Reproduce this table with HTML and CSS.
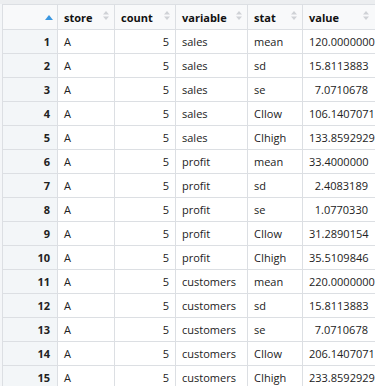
FILE: index.html
```html
<!DOCTYPE html>
<html lang="en">
<head>
    <meta charset="UTF-8">
    <title>Data Viewer</title>
    <link rel="stylesheet" href="styles.css">
</head>
<body>
    <div class="top-strip"></div>
    <table class="grid">
        <thead>
            <tr>
                <th class="col-row">
                    <svg class="sort sort-active" width="8" height="5" viewBox="0 0 8 5"><path d="M0 5 L4 0 L8 5 Z"/></svg>
                </th>
                <th class="col-store">store<svg class="sort" width="6" height="9" viewBox="0 0 6 9"><path d="M0 3.5 L3 0 L6 3.5 Z M0 5.5 L3 9 L6 5.5 Z"/></svg></th>
                <th class="col-count">count<svg class="sort" width="6" height="9" viewBox="0 0 6 9"><path d="M0 3.5 L3 0 L6 3.5 Z M0 5.5 L3 9 L6 5.5 Z"/></svg></th>
                <th class="col-variable">variable<svg class="sort" width="6" height="9" viewBox="0 0 6 9"><path d="M0 3.5 L3 0 L6 3.5 Z M0 5.5 L3 9 L6 5.5 Z"/></svg></th>
                <th class="col-stat">stat<svg class="sort" width="6" height="9" viewBox="0 0 6 9"><path d="M0 3.5 L3 0 L6 3.5 Z M0 5.5 L3 9 L6 5.5 Z"/></svg></th>
                <th class="col-value">value<svg class="sort" width="6" height="9" viewBox="0 0 6 9"><path d="M0 3.5 L3 0 L6 3.5 Z M0 5.5 L3 9 L6 5.5 Z"/></svg></th>
            </tr>
        </thead>
        <tbody id="rows"></tbody>
    </table>

    <script>
        const data = [
            ['sales', 'mean', '120.0000000'],
            ['sales', 'sd', '15.8113883'],
            ['sales', 'se', '7.0710678'],
            ['sales', 'CIlow', '106.1407071'],
            ['sales', 'CIhigh', '133.8592929'],
            ['profit', 'mean', '33.4000000'],
            ['profit', 'sd', '2.4083189'],
            ['profit', 'se', '1.0770330'],
            ['profit', 'CIlow', '31.2890154'],
            ['profit', 'CIhigh', '35.5109846'],
            ['customers', 'mean', '220.0000000'],
            ['customers', 'sd', '15.8113883'],
            ['customers', 'se', '7.0710678'],
            ['customers', 'CIlow', '206.1407071'],
            ['customers', 'CIhigh', '233.8592929']
        ];

        const body = document.getElementById('rows');
        data.forEach((row, i) => {
            const tr = document.createElement('tr');
            tr.innerHTML =
                '<td class="rownum">' + (i + 1) + '</td>' +
                '<td>A</td>' +
                '<td class="num">5</td>' +
                '<td>' + row[0] + '</td>' +
                '<td>' + row[1] + '</td>' +
                '<td class="num">' + row[2] + '</td>';
            body.appendChild(tr);
        });
    </script>
</body>
</html>
```

FILE: styles.css
```css
* {
    margin: 0;
    padding: 0;
    box-sizing: border-box;
}

body {
    background: #f4f6f8;
    padding-left: 2px;
    font-family: "Open Sans", "Noto Sans", sans-serif;
    font-size: 11px;
    color: #222;
    overflow: hidden;
}

.top-strip {
    height: 4px;
    margin-left: -2px;
    background: #eceef0;
}

.grid {
    border-collapse: separate;
    border-spacing: 0;
    table-layout: fixed;
    width: 374px;
    background: white;
    border-top: 1px solid #dcdfe3;
    border-left: 1px solid #dcdfe3;
}

.grid th,
.grid td {
    border-right: 1px solid #dcdfe3;
    border-bottom: 1px solid #dcdfe3;
    padding: 0 6px;
    white-space: nowrap;
    overflow: hidden;
    text-align: left;
}

.grid th {
    position: relative;
    height: 25px;
    background: #f8f9fa;
    font-weight: bold;
    color: #111;
}

.grid td {
    height: 24px;
}

.col-row { width: 55px; }
.col-store { width: 57px; }
.col-count { width: 61px; }
.col-variable { width: 72px; }
.col-stat { width: 55px; }
.col-value { width: 73px; }

.grid .num {
    text-align: right;
}

.grid td.num:last-child {
    padding-right: 7px;
}

.grid .rownum {
    text-align: right;
    padding-right: 7px;
    background: #f3f6f8;
    font-weight: bold;
    color: #222;
}

.sort {
    position: absolute;
    top: 6px;
    right: 5px;
    fill: #cfd2d6;
}

.col-value .sort {
    right: 6px;
}

.sort-active {
    top: 10px;
    right: 4px;
    fill: #3b97e0;
}
```
